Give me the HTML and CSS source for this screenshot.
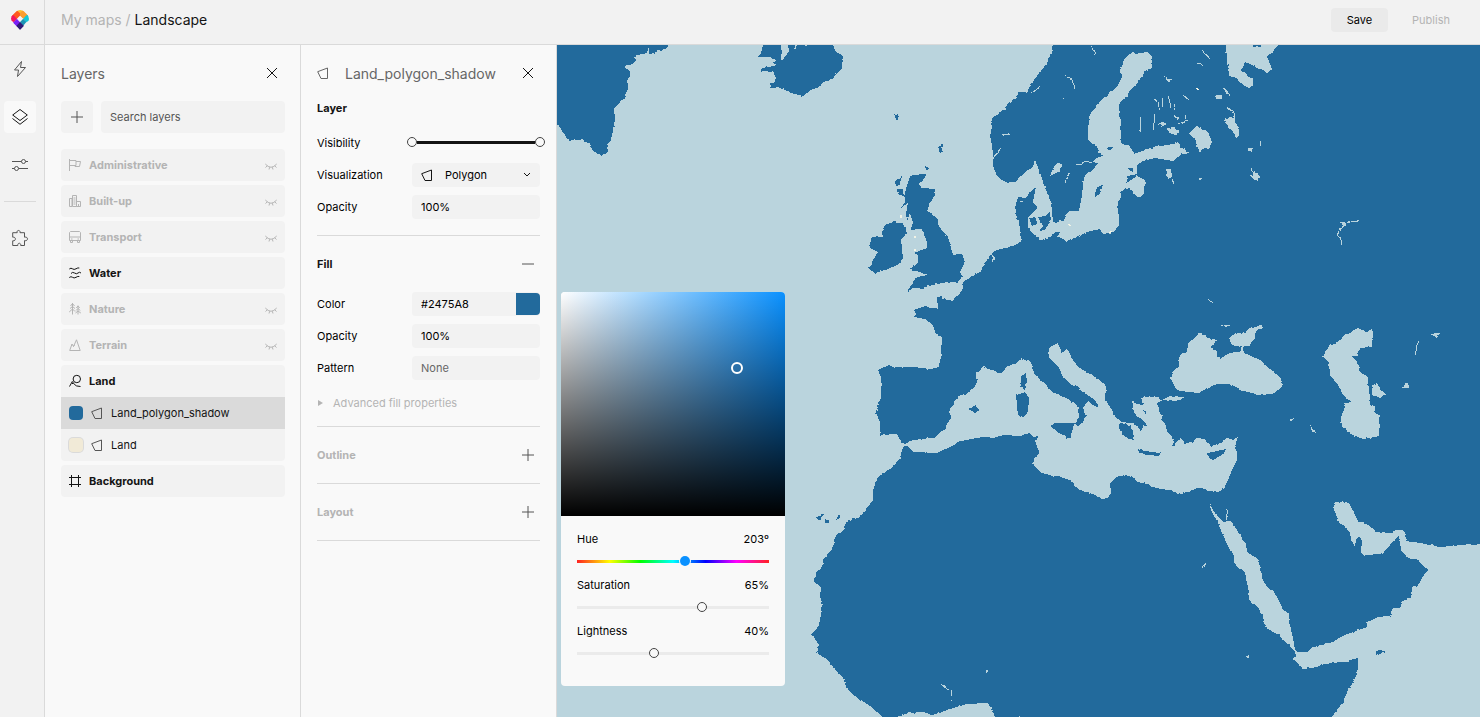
FILE: index.html
```html
<!DOCTYPE html>
<html lang="en">
<head>
<meta charset="utf-8">
<title>Landscape – My maps</title>
<link rel="stylesheet" href="styles.css">
</head>
<body>
<svg class="sprite" aria-hidden="true">
  <symbol id="i-polygon" viewBox="0 0 12 12"><path d="M.7 4.7 10.5 1v10.5H4L.7 4.7z"/></symbol>
  <symbol id="i-eye" viewBox="0 0 12 12"><path d="M.3 5Q6 11.500 11.700 5M2.300 6.800.5 8.500M9.700 6.800 11.500 8.500M4.700 8.200 4 10.500M7.300 8.200 8 10.500"/></symbol>
  <symbol id="i-plus" viewBox="0 0 12 12"><path d="M0 6h12M6 0v12"/></symbol>
  <symbol id="i-close" viewBox="0 0 12 12"><path d="M1 1l10 10M11 1 1 11"/></symbol>
</svg>

<header class="topbar">
  <a class="logo" href="#" aria-label="Home">
    <svg viewBox="0 0 54 60" width="18" height="20">
      <clipPath id="pin"><path d="M27 60 8 41Q0 33 0 26q0-8 7-13l8-8q12-10 25 0l8 8q6 6 6 14 0 6-6 13z"/></clipPath>
      <g clip-path="url(#pin)">
        <path fill="#fbc02d" d="M27 19 6-4h42z"/>
        <path fill="#fb9e2f" d="M27 9 36 0l18 18-18 8-9-8z"/>
        <path fill="#ff5a1f" d="M27 19l-9 9-18-9L18 1l2 2 7 7z"/>
        <path fill="#f1175d" d="M0 17l8-1 10 11-9 10-12-6z"/>
        <path fill="#12c8d8" d="M54 14l-8 2-10 11 9 10 12-6z"/>
        <path fill="#1b93b4" d="M36 26l10 10-10 12-10-12z"/>
        <path fill="#7a20f5" d="M18 26 6 38l12 12 10-13z"/>
        <path fill="#2f1a78" d="M27 36 16 48l11 13 12-13z"/>
        <path fill="#f4f4f4" d="M27 17l9 9-9 10-9-10z"/>
      </g>
    </svg>
  </a>
  <nav class="crumbs" aria-label="Breadcrumb"><a href="#">My maps</a> / <span class="crumb-current">Landscape</span></nav>
  <div class="actions">
    <button class="btn btn-save" type="button">Save</button>
    <button class="btn btn-publish" type="button" disabled>Publish</button>
  </div>
</header>

<main class="workspace">
  <nav class="rail" aria-label="Tools">
    <button class="rail-btn" type="button" aria-label="Quick edit"><svg class="icon i16" viewBox="0 0 16 16"><path d="M9.500.5 2.500 9h4l-1 6.500 8-9h-5l1-6z"/></svg></button>
    <button class="rail-btn is-active" type="button" aria-label="Layers"><svg class="icon i16" viewBox="0 0 16 16"><path d="M8 .5 15.300 6 8 11.500.7 6zM.5 9.500 8 15.300l7.500-5.800"/></svg></button>
    <button class="rail-btn" type="button" aria-label="Settings"><svg class="icon i16" viewBox="0 0 16 16"><path d="M0 4.500h9.500M13.500 4.500H16M0 11.500h2.500M6.500 11.500H16"/><circle cx="11.500" cy="4.500" r="2"/><circle cx="4.500" cy="11.500" r="2"/></svg></button>
    <hr class="rail-rule">
    <button class="rail-btn" type="button" aria-label="Extensions"><svg class="icon i16" viewBox="0 0 16 16"><path d="M.7 2.700h4.500c-1-3 3.600-3 2.800 0h4.500v4.500c4-1 4 4.400 0 3.400v4.900H8.700c.6-3-3.400-3-2.900 0H.7v-4.700c3.600.6 3.600-4.300 0-3.600z"/></svg></button>
  </nav>

  <section class="panel">
    <div class="panel-head">
      <h2 class="panel-title">Layers</h2>
      <button class="icon-btn" type="button" aria-label="Close layers"><svg class="icon i12 dark"><use href="#i-close"/></svg></button>
    </div>
    <div class="search-row">
      <button class="add-btn" type="button" aria-label="Add layer"><svg class="icon i12"><use href="#i-plus"/></svg></button>
      <input class="search" type="text" placeholder="Search layers" aria-label="Search layers">
    </div>
    <ul class="groups">
      <li class="group is-hidden"><div class="row"><svg class="icon i12" viewBox="0 0 12 12"><path d="M.5 0v12M.5 1.500H7v5H.5M7 2.500h4.500l-1 5H6v-1"/></svg><span>Administrative</span><svg class="icon i12 eye"><use href="#i-eye"/></svg></div></li>
      <li class="group is-hidden"><div class="row"><svg class="icon i12" viewBox="0 0 12 12"><path d="M.5 3.500H3v8H.5zM3.500.5h4v11h-4zM7.500 6.500h4v5h-4zM4.500 3h2M4.500 5h2M4.500 7h2M4.500 9h2M9.500 9v2.500"/></svg><span>Built-up</span><svg class="icon i12 eye"><use href="#i-eye"/></svg></div></li>
      <li class="group is-hidden"><div class="row"><svg class="icon i12" viewBox="0 0 12 12"><path d="M1.500.5h9l1 1v8H.5v-8zM.5 6h11M2 8h1.500M8.500 8H10M1.500 9.500v2h2v-2M8.500 9.500v2h2v-2"/></svg><span>Transport</span><svg class="icon i12 eye"><use href="#i-eye"/></svg></div></li>
      <li class="group"><div class="row"><svg class="icon i12" viewBox="0 0 12 12"><path d="M.3 2Q2 .5 3.500 1.800T7 1.800t3.300-.8M2 6.500Q3.500 4.500 5.500 6T9 6t3 0M.3 10.500Q2 9 3.500 10.300T7 10.300t3.300-.8"/></svg><span>Water</span></div></li>
      <li class="group is-hidden"><div class="row"><svg class="icon i12" viewBox="0 0 12 12"><path d="M3.500 0v11.500M1.500 3l2-2.500 2 2.500M1 5.500l2.500-2 2.500 2M.2 9l3.300-3L6 8.500M9 2.500v9M7.300 5 9 3l1.700 2M7 7.500 9 5.500l2.300 2M6.500 10 9 8l2.800 2"/></svg><span>Nature</span><svg class="icon i12 eye"><use href="#i-eye"/></svg></div></li>
      <li class="group is-hidden"><div class="row"><svg class="icon i12" viewBox="0 0 12 12"><path d="M.7 11.500 3 5l1.500 2.500L7.500.8l3.700 10.700zM4.500 7.500 5.500 6"/></svg><span>Terrain</span><svg class="icon i12 eye"><use href="#i-eye"/></svg></div></li>
      <li class="group">
        <div class="row"><svg class="icon i12" viewBox="0 0 12 12"><circle cx="7.800" cy="4" r="3.700"/><path d="M.5 11.500 3.300 6.500l2 2.800q1.500 2.200 6.200 2.200M3 8.500h1"/></svg><span>Land</span></div>
        <div class="row sub is-selected"><i class="swatch swatch-blue"></i><svg class="icon i12 soft"><use href="#i-polygon"/></svg><span>Land_polygon_shadow</span></div>
        <div class="row sub"><i class="swatch swatch-sand"></i><svg class="icon i12 soft"><use href="#i-polygon"/></svg><span>Land</span></div>
      </li>
      <li class="group"><div class="row"><svg class="icon i12" viewBox="0 0 12 12"><path d="M2.500 0v12M9.500 0v12M0 2.500h12M0 9.500h12"/></svg><span>Background</span></div></li>
    </ul>
  </section>

  <section class="panel props">
    <div class="panel-head">
      <svg class="icon i12 head-icon"><use href="#i-polygon"/></svg>
      <h2 class="panel-title">Land_polygon_shadow</h2>
      <button class="icon-btn" type="button" aria-label="Close properties"><svg class="icon i12 dark"><use href="#i-close"/></svg></button>
    </div>

    <div class="section">
      <h3 class="section-title">Layer</h3>
      <div class="fields">
        <div class="field"><label for="vis-min">Visibility</label>
          <div class="dual">
            <input id="vis-min" class="range" type="range" min="0" max="22" value="0">
            <input class="range" type="range" min="0" max="22" value="22" aria-label="Maximum visibility">
          </div>
        </div>
        <div class="field"><label for="viz">Visualization</label>
          <div class="select-wrap">
            <svg class="icon i12 select-icon dark"><use href="#i-polygon"/></svg>
            <select id="viz" class="control select"><option>Polygon</option></select>
            <svg class="icon select-arrow dark" viewBox="0 0 8 6"><path d="M1 1l3 3 3-3"/></svg>
          </div>
        </div>
        <div class="field"><label for="op1">Opacity</label><input id="op1" class="control" type="text" value="100%"></div>
      </div>
    </div>

    <div class="section">
      <div class="section-head"><h3 class="section-title">Fill</h3><button class="icon-btn" type="button" aria-label="Remove fill"><svg class="icon i12" viewBox="0 0 12 12"><path d="M0 6h12"/></svg></button></div>
      <div class="fields">
        <div class="field"><label for="color">Color</label>
          <div class="color-wrap"><input id="color" class="control" type="text" value="#2475A8"><button class="color-chip" type="button" aria-label="Pick colour"></button></div>
        </div>
        <div class="field"><label for="op2">Opacity</label><input id="op2" class="control" type="text" value="100%"></div>
        <div class="field"><label for="pattern">Pattern</label><input id="pattern" class="control" type="text" placeholder="None"></div>
      </div>
      <button class="advanced" type="button"><svg class="tri" viewBox="0 0 5 6" width="5" height="6"><path d="M0 0l5 3-5 3z"/></svg>Advanced fill properties</button>
    </div>

    <div class="section"><div class="section-head is-off"><h3 class="section-title">Outline</h3><button class="icon-btn" type="button" aria-label="Add outline"><svg class="icon i12"><use href="#i-plus"/></svg></button></div></div>
    <div class="section"><div class="section-head is-off"><h3 class="section-title">Layout</h3><button class="icon-btn" type="button" aria-label="Add layout"><svg class="icon i12"><use href="#i-plus"/></svg></button></div></div>
  </section>

  <section class="map" aria-label="Map">
    <svg class="map-canvas" viewBox="557 45 923 672" preserveAspectRatio="xMinYMin slice">
      <defs>
        <filter id="coast" filterUnits="userSpaceOnUse" x="500" y="0" width="1040" height="760" color-interpolation-filters="sRGB">
          <feTurbulence type="fractalNoise" baseFrequency=".16" numOctaves="3" seed="4" result="n"/>
          <feDisplacementMap in="SourceGraphic" in2="n" scale="3" xChannelSelector="R" yChannelSelector="G"/>
        </filter>
      </defs>
      <g filter="url(#coast)">
        <g class="land">
          <!-- Greenland and Iceland -->
          <path d="M540 30H668V46L661 51 658 50 654 53 649 54 649 47 647 53 634 56 636 60 632 64 624 66 630 72 630 76 626 81 628 88 623 100 614 108 615 120 613 130 611 140 607 145 608 152 602 156 596 153 590 148 591 144 584 141 583 137 579 140 569 141 565 135 559 127 557 120 540 115z"/>
          <path d="M763 30V47L761 53 757 57 769 57 776 60 773 63 777 65 768 67 760 69 762 71 773 71 776 78 774 83 770 83 770 88 783 88 791 93 803 96 811 90 819 87 824 82 834 78 838 72 842 68 843 56 836 52 833 45V30H808L806 49 803 30H798L795 52 791 30H789L789 51 785 57 781 60 781 50 779 30z"/>
          <!-- Europe, Asia and Africa -->
          <path d="M1500 30H1054L1053 45 1051 53 1047 63 1042 70 1037 76 1032 83 1027 92 1018 92 1017 98 1010 103 1004 108 1007 109 1000 112 992 118 991 128 991 140 993 153 993 165 996 175 1002 180 1008 183 1017 181 1025 172 1033 167 1035 160 1038 167 1040 173 1045 187 1048 197 1052 203 1052 212 1053 222 1064 221 1065 215 1069 211 1079 211 1082 195 1083 183 1085 175 1093 170 1098 163 1092 162 1102 156 1097 147 1088 140 1088 127 1091 113 1098 103 1107 95 1117 87 1122 77 1121 68 1124 60 1132 51 1135 54 1147 52 1152 57 1152 68 1146 70 1140 80 1128 92 1128 97 1122 100 1119 105 1121 127 1121 143 1130 147 1135 154 1150 148 1178 143 1180 147 1190 153 1182 154 1173 161 1155 158 1143 161 1137 165 1137 176 1145 180 1144 193 1140 198 1136 196 1130 188 1125 188 1122 192 1118 202 1119 225 1113 232 1103 234 1100 229 1087 232 1078 237 1065 241 1058 237 1060 233 1056 232 1050 237 1040 240 1037 237 1032 233 1028 227 1028 218 1033 212 1037 207 1033 203 1035 188 1030 192 1027 197 1018 197 1016 205 1016 218 1019 222 1022 242 1010 247 997 250 992 253 987 260 983 268 978 273 963 282 963 290 952 300 942 299 942 296 937 297 938 308 930 308 926 306 913 310 917 313 914 317 925 319 933 325 935 332 942 337 941 353 939 367 932 369 913 367 893 367 889 365 878 370 881 377 881 397 876 413 880 422 880 435 897 434 902 443 908 445 903 447 900 458 893 467 878 477 873 490 873 500 860 517 847 522 843 531 835 537 832 550 824 558 821 568 816 573 815 582 821 587 820 597 823 605 819 625 812 634 819 645 817 653 828 660 835 670 843 677 846 687 852 694 870 706 883 717V740H1500z"/>
          <!-- Great Britain and Ireland -->
          <path d="M912 175 926 174 925 178 919 183 922 188 936 189 935 195 930 203 927 212 932 213 938 220 941 230 948 237 953 255 962 254 965 262 960 272 963 277 957 282 942 283 933 285 922 288 913 288 907 292 913 282 917 277 927 275 922 273 910 269 918 263 918 255 914 253 927 248 927 242 923 232 921 229 911 230 913 222 910 213 907 221 906 212 908 203 901 208 905 200 905 192 908 182z"/>
          <path d="M893 222 903 224 907 233 901 240 903 257 900 264 890 268 875 273 868 268 873 260 878 252 870 248 871 237 882 237 882 231 885 225z"/>
          <path d="M902 176 895 181 896 187 900 183zM897 189 903 190 905 197 899 195zM894 114 899 116 897 120zM938 146 943 144 942 150 940 155zM925 166 930 168 926 170z"/>
          <!-- Baltic islands -->
          <path d="M1029 218h7l1 6-5 2zM1038 217 1046 216 1050 211 1051 220 1045 230 1039 231 1043 226zM1095 197 1096 188 1103 185 1100 194zM1107 147h6l-3 4zM1126 183 1127 176 1137 174 1135 178zM1127 169 1133 167 1133 172z"/>
        </g>
        <g class="sea">
          <!-- Mediterranean -->
          <path d="M904 445 910 441 918 439 935 438 940 432 946 429 947 423 952 417 949 412 958 396 967 393 977 385 976 373 983 367 1000 373 1008 366 1015 364 1021 358 1032 363 1034 373 1040 380 1053 392 1068 399 1075 403 1078 408 1079 418 1075 424 1078 427 1082 422 1087 415 1083 408 1087 402 1095 406 1098 405 1095 400 1080 390 1079 386 1072 385 1063 377 1059 368 1049 358 1049 347 1058 343 1062 353 1066 348 1069 352 1072 358 1078 367 1090 374 1100 380 1106 387 1105 400 1112 410 1118 420 1121 423 1133 423 1138 428 1142 431 1143 425 1147 425 1140 418 1134 413 1132 401 1137 404 1143 405 1141 398 1152 396 1158 397 1162 401 1158 402 1159 412 1163 415 1161 420 1166 425 1167 432 1173 437 1175 443 1180 438 1185 443 1193 443 1196 438 1203 439 1212 446 1220 443 1227 438 1233 440 1238 437 1236 443 1237 460 1232 470 1225 488 1218 492 1207 491 1198 488 1192 490 1182 494 1167 490 1152 487 1148 484 1137 482 1133 477 1125 475 1117 477 1110 483 1111 493 1107 498 1102 499 1093 494 1077 489 1072 481 1057 476 1048 475 1040 472 1032 464 1039 453 1035 440 1039 436 1033 437 1030 433 1020 436 1003 435 993 438 983 437 960 441 950 447 937 453 928 453 913 452 909 447z"/>
          <!-- Marmara, Black Sea, Azov -->
          <path d="M1162 400 1170 396 1185 397 1180 400 1172 401z"/>
          <path d="M1171 379 1174 370 1179 367 1179 358 1182 353 1187 352 1188 343 1195 338 1199 333 1205 334 1207 338 1217 340 1210 347 1217 351 1217 357 1221 358 1230 353 1243 351 1247 354 1262 361 1270 370 1280 377 1283 385 1278 391 1272 394 1257 395 1242 390 1230 384 1217 384 1207 388 1199 393 1180 391 1175 387z"/>
          <path d="M1229 338 1233 334 1245 332 1252 328 1262 325 1263 328 1255 332 1255 338 1251 343 1249 347 1243 347 1243 352 1241 352 1241 346 1232 345z"/>
          <!-- Caspian -->
          <path d="M1323 357 1329 345 1340 341 1343 336 1358 328 1365 331 1373 330 1372 347 1360 348 1357 352 1358 356 1352 356 1357 362 1360 372 1368 377 1369 390 1371 405 1375 406 1374 412 1379 415 1379 436 1363 439 1353 435 1348 431 1342 428 1341 417 1344 410 1345 403 1352 402 1343 395 1338 385 1330 375 1329 363z"/>
          <path d="M1372 386 1377 383 1380 388 1386 395 1380 398 1372 395z"/>
          <!-- Red Sea, Persian Gulf, Indian Ocean -->
          <path d="M1209 503 1215 513 1223 522 1225 521 1231 521 1246 544 1247 552 1257 559 1261 568 1262 578 1267 587 1276 594 1282 607 1289 615 1291 630 1295 647 1297 652 1307 652 1313 647 1330 643 1345 635 1367 627 1367 622 1378 617 1390 616 1392 609 1401 607 1403 601 1411 598 1412 587 1417 587 1427 570 1418 560 1407 557 1401 550 1399 535 1382 554 1363 555 1361 552 1362 540 1358 537 1356 540 1355 547 1351 540 1350 532 1339 522 1333 507 1334 503 1342 501 1349 503 1358 521 1368 525 1377 532 1387 534 1397 530 1403 530 1407 541 1420 543 1440 547 1463 545 1500 544V740H1322L1333 717 1343 702 1348 690 1356 677 1358 670 1358 658 1353 658 1347 662 1327 663 1317 667 1303 669 1293 659 1296 657 1295 651 1288 645 1278 635 1267 628 1263 618 1258 607 1249 600 1247 580 1245 573 1235 565 1235 557 1230 550 1222 533 1218 523 1212 512z"/>
          <!-- Gulf of Guinea -->
          <path d="M885 740 897 717 907 713 923 712 933 715 953 708 967 704 987 703 992 708 995 717V740z"/>
          <!-- White Sea -->
          <path d="M1226 30V46L1227 60 1229 75 1238 79 1245 87 1249 88 1253 84 1253 78 1247 77 1241 70 1246 62 1267 73 1272 69 1267 57 1278 45V30z"/>
          <!-- Lakes -->
          <path d="M1050 176 1053 169 1057 164 1062 164 1061 171 1056 173zM1189 133 1197 125 1208 132 1212 142 1209 148 1204 148 1200 153 1198 148 1195 140zM1225 118 1232 117 1239 128 1239 135 1236 138 1233 132 1227 125zM1166 169 1171 169 1172 177 1168 179zM1247 173 1252 176 1254 171 1260 177 1258 181 1253 179zM1197 178h5l-2 3zM1248 148h5v3h-5zM1216 95h5v4h-4zM1164 76l4 3 4 0-3 4zM1224 88l4 4 2 4-3-1zM1202 50l8 8-5-3zM1183 94l6 6-5-3zM1168 128l5-1 8 5-5 3-7-2zM1161 122l4 2-3 3zM1174 116l6 2-3 2zM1406 382l3 6-6 0zM1289 420l5-2-2 3zM1310 424l5 9-3-1zM1309 399l4 4zM1208 299l6 4-4-1zM1215 417l4 3zM1429 333l7 0 4 0-3 5-3-2zM1246 655h3v3h-3zM1341 222h6l-4 4zM1294 464l2 3zM1297 475l3 4z"/>
        </g>
        <g class="sea-line">
          <path d="M1065 183l4-10M1075 165l6-1 5-3 6 2M1082 207l4-13M1031 93l6-3 3-4M1002 134h8M993 158l8-10M1064 75l8 5 3 9M1091 46l4 8M1063 98l4 1M1172 179l2 5M1227 107l6 5 1 8M1195 66q5-5 8 0M1154 99l4 3v8M1162 97v10M1168 95l3 12M1174 103v7M1187 113l-2 6M1178 124l9-4M1155 114l-2 16M1140 118v14M1158 125l4-3M1260 141l1 4M1415 355l2-10 2-4M1221 325h9M1228 509l-2 10M1018 201h5M991 253l3 6-2 3M1252 172l1-5"/>
          <path d="M1358 221l-11 1-6 7-4 6 4 5v5"/>
          <path d="M941 684l6 5 4 1v10M987 669v4M1019 715v2M1208 563l-6 5"/>
        </g>
        <g class="land">
          <!-- Mediterranean islands -->
          <path d="M1020 377 1026 373 1027 383 1024 391 1020 387zM1016 395 1025 392 1029 398 1028 413 1023 417 1018 415zM1050 426 1054 423 1075 423 1072 430 1072 438 1067 438 1058 432zM968 409 976 405 979 409 975 413z"/>
          <path d="M1119 424 1132 425 1133 432 1134 440 1129 439 1123 435 1119 428zM1138 449 1143 451 1161 453 1158 456 1150 455 1139 454zM1207 453 1218 451 1226 449 1222 455 1213 460 1208 457zM1171 445 1175 441 1175 446zM1159 413h4l-1 2zM1144 410l4 2-3 2zM1141 436l2 2zM1155 440l3 2z"/>
          <!-- Socotra and Canary Islands -->
          <path d="M1374 652 1380 650 1386 652 1379 655zM816 517l7-2-4 6zM825 519h4v4h-4zM836 520l3-6 2 0 0 4z"/>
          <path d="M1252 30h9v17h-9z"/>
        </g>
      </g>
      <path class="unfilled" d="M901 215v3M915 236v2M915 249v2M1069 224l1 2M1110 233l1-2M1197 88l1 2"/>
    </svg>

    <div class="picker" role="dialog" aria-label="Colour picker">
      <div class="spectrum"><i class="spectrum-dot"></i></div>
      <div class="sliders">
        <div class="slider"><label for="hue">Hue</label><output for="hue">203º</output><input id="hue" class="range range-hue" type="range" min="0" max="360" value="203"></div>
        <div class="slider"><label for="sat">Saturation</label><output for="sat">65%</output><input id="sat" class="range" type="range" value="65"></div>
        <div class="slider"><label for="light">Lightness</label><output for="light">40%</output><input id="light" class="range" type="range" value="40"></div>
      </div>
    </div>
  </section>
</main>
</body>
</html>
```
FILE: styles.css
```css
:root {
  --bar: #f2f2f2;
  --panel: #f9f9f9;
  --line: #dadada;
  --text: #141414;
  --soft: #666;
  --muted: #b4b4b4;
  --land: #226a9c;
  --sea: #bad4dd;
}

* { box-sizing: border-box; }

body {
  margin: 0;
  min-height: 100vh;
  display: grid;
  grid-template-rows: auto 1fr;
  background: var(--panel);
  color: var(--text);
  font: 400 11px/16px Inter, "Liberation Sans", sans-serif;
}

button, input, select {
  font: inherit;
  color: inherit;
  border: 0;
  background: none;
  padding: 0;
  margin: 0;
  min-width: 0;
}

h2, h3, ul { margin: 0; padding: 0; }
ul { list-style: none; }
a { color: inherit; text-decoration: none; }

.sprite { position: absolute; width: 0; height: 0; }
.icon { fill: none; stroke: currentColor; stroke-width: 1; flex: none; overflow: visible; }
.i12 { width: 12px; height: 12px; }
.i16 { width: 16px; height: 16px; }
.dark { color: var(--text); }
.soft { color: #555; }

.topbar {
  display: flex;
  align-items: center;
  height: 45px;
  padding: 0 14px 4px 0;
  background: linear-gradient(90deg, transparent 44px, var(--line) 44px 45px, transparent 45px) var(--bar);
  border-bottom: 1px solid var(--line);
}
.logo { width: 45px; padding-left: 11px; display: flex; }
.crumbs { padding-left: 16px; font-size: 14px; line-height: 20px; color: var(--muted); }
.crumb-current { color: var(--text); }
.actions { margin-left: auto; display: flex; gap: 8px; }
.btn { height: 24px; padding: 0 16px; border-radius: 4px; }
.btn-save { background: #eaeaea; color: #000; }
.btn-publish { color: var(--muted); }

.workspace { display: grid; grid-template-columns: 45px 256px 256px 1fr; }

.rail {
  display: flex;
  flex-direction: column;
  gap: 16px;
  padding: 8px 8px 8px 4px;
  background: var(--bar);
  border-right: 1px solid var(--line);
}
.rail-btn { width: 32px; height: 32px; display: grid; place-items: center; border-radius: 4px; color: #555; }
.rail-btn.is-active { background: var(--panel); color: var(--text); }
.rail-rule { width: 32px; margin: 4px 0; border: 0; border-top: 1px solid var(--line); }

.panel { padding: 0 15px 16px 16px; border-right: 1px solid var(--line); background: var(--panel); }
.panel-head { display: flex; align-items: center; height: 56px; color: var(--soft); }
.panel-title { padding-top: 2px; font-size: 14px; font-weight: 400; line-height: 20px; }
.head-icon { margin-right: 16px; }
.icon-btn { width: 24px; height: 24px; margin-left: auto; display: grid; place-items: center; color: #555; }
.panel-head .icon-btn { margin-right: 1px; }

.search-row { display: flex; gap: 8px; margin-bottom: 16px; }
.add-btn { width: 32px; height: 32px; display: grid; place-items: center; background: var(--bar); border-radius: 4px; color: #555; }
.search { flex: 1; height: 32px; padding: 0 9px; background: var(--bar); border-radius: 4px; }
.search::placeholder { color: #555; }

.groups { display: grid; gap: 4px; }
.group { background: var(--bar); border-radius: 4px; overflow: hidden; }
.row { display: flex; align-items: center; gap: 8px; height: 32px; padding: 0 8px; font-weight: 700; }
.is-hidden { color: var(--muted); }
.eye { margin-left: auto; }
.sub { font-weight: 400; }
.is-selected { background: var(--line); }
.swatch { width: 14px; height: 14px; border-radius: 4px; }
.swatch-blue { background: var(--land); }
.swatch-sand { background: #f1ead7; box-shadow: 0 0 0 1px var(--line); }

.props { padding-right: 16px; }
.props .panel-head .icon-btn { margin-right: 0; }
.section { border-bottom: 1px solid var(--line); }
.section-title { font-size: 11px; font-weight: 700; line-height: 14px; }
.section-head { display: flex; align-items: center; height: 56px; }
.is-off .section-title { color: var(--muted); }
.section > .section-title { margin-bottom: 16px; }
.fields { display: grid; gap: 8px; padding-bottom: 16px; color: #000; }
.section-head + .fields { padding-bottom: 8px; }
.field { display: grid; grid-template-columns: 95px 1fr; align-items: center; min-height: 24px; }
.control { width: 100%; height: 24px; padding: 0 9px; background: var(--bar); border-radius: 4px; }
.control::placeholder { color: var(--soft); }

.select-wrap { display: grid; align-items: center; }
.select-wrap > * { grid-area: 1 / 1; }
.select { appearance: none; padding: 0 24px 0 33px; }
.select-icon { margin-left: 9px; z-index: 1; pointer-events: none; }
.select-arrow { width: 8px; height: 6px; justify-self: end; margin-right: 9px; z-index: 1; pointer-events: none; }

.color-wrap { display: flex; align-items: center; background: var(--bar); border-radius: 4px; }
.color-wrap .control { flex: 1; }
.color-chip { width: 24px; height: 22px; background: var(--land); border-radius: 0 4px 4px 0; }

.advanced { display: flex; align-items: center; gap: 10px; height: 30px; margin-bottom: 8px; padding-left: 1px; color: var(--muted); }
.tri { fill: var(--muted); }

/* The thumb centre travels the full length of the drawn track. */
.range {
  appearance: none;
  width: calc(100% + 10px);
  height: 16px;
  margin: 0 -5px;
  background: linear-gradient(#ebebeb, #ebebeb) center / calc(100% - 10px) 3px no-repeat;
}
.range::-webkit-slider-thumb {
  appearance: none;
  width: 10px;
  height: 10px;
  background: var(--panel);
  border: 1px solid #444;
  border-radius: 50%;
}
.range-hue {
  background-image: linear-gradient(90deg, #f22, #ff0 17%, #0f0 33%, #0ff 50%, #00f 67%, #f0f 83%, #f22);
}
.range-hue::-webkit-slider-thumb { border: 0; background: #0a91ff; box-shadow: 0 0 0 1px var(--panel); }

.dual { display: grid; padding-bottom: 2px; }
.dual .range { grid-area: 1 / 1; background: none; pointer-events: none; }
.dual .range:first-child { background: linear-gradient(var(--text), var(--text)) center / calc(100% - 20px) 3px no-repeat; }
.dual .range::-webkit-slider-thumb { pointer-events: auto; }

.map { position: relative; overflow: hidden; background: var(--sea); }
.map-canvas { position: absolute; inset: 0; width: 100%; height: 100%; shape-rendering: crispEdges; }
.land { fill: var(--land); }
.sea { fill: var(--sea); }
.sea-line { fill: none; stroke: var(--sea); stroke-width: 1; }
.unfilled { fill: none; stroke: #f1f3e6; stroke-width: 2; }

.picker {
  position: absolute;
  left: 4px;
  top: 247px;
  width: 224px;
  background: var(--panel);
  border-radius: 4px;
  overflow: hidden;
}
.spectrum {
  position: relative;
  aspect-ratio: 1;
  background: linear-gradient(transparent, #000), linear-gradient(90deg, #fff, #0a91ff);
}
.spectrum-dot {
  position: absolute;
  left: 170px;
  top: 70px;
  width: 12px;
  height: 12px;
  border: 2px solid #fff;
  border-radius: 50%;
}
.sliders { display: grid; gap: 8px; padding: 15px 16px 25px; }
.slider { display: grid; grid-template-columns: 1fr auto; row-gap: 6px; color: #000; }
.slider .range { grid-column: 1 / -1; }
```
